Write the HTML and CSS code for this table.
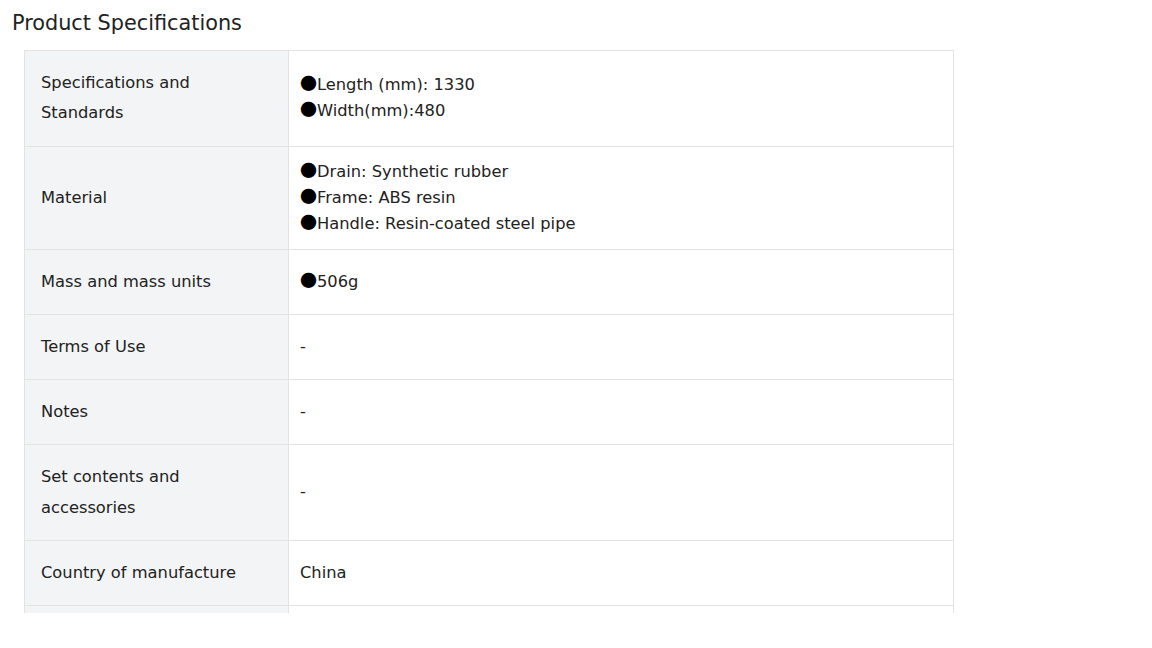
FILE: index.html
```html
<!DOCTYPE html>
<html lang="en">
<head>
<meta charset="utf-8">
<title>Product Specifications</title>
<link rel="stylesheet" href="styles.css">
</head>
<body>
<div class="page">
  <h2 class="title">Product Specifications</h2>
  <div class="table-wrap">
    <table class="spec">
      <tr>
        <th>Specifications and<br>Standards</th>
        <td><p><span class="dot">●</span>Length (mm): 1330</p><p><span class="dot">●</span>Width(mm):480</p></td>
      </tr>
      <tr>
        <th>Material</th>
        <td><p><span class="dot">●</span>Drain: Synthetic rubber</p><p><span class="dot">●</span>Frame: ABS resin</p><p><span class="dot">●</span>Handle: Resin-coated steel pipe</p></td>
      </tr>
      <tr>
        <th>Mass and mass units</th>
        <td><p><span class="dot">●</span>506g</p></td>
      </tr>
      <tr>
        <th>Terms of Use</th>
        <td><p>-</p></td>
      </tr>
      <tr>
        <th>Notes</th>
        <td><p>-</p></td>
      </tr>
      <tr>
        <th>Set contents and<br>accessories</th>
        <td><p>-</p></td>
      </tr>
      <tr>
        <th>Country of manufacture</th>
        <td><p>China</p></td>
      </tr>
      <tr>
        <th>JAN code</th>
        <td><p>-</p></td>
      </tr>
    </table>
  </div>
</div>
</body>
</html>
```

FILE: styles.css
```css
html, body {
  margin: 0;
  padding: 0;
  background: #ffffff;
}
body {
  font-family: "DejaVu Sans", "Noto Sans CJK JP", sans-serif;
  color: #222222;
}
.page {
  padding: 8px 12px 0;
}
.title {
  margin: 0;
  font-size: 20.8px;
  font-weight: 400;
  line-height: 30px;
  color: #222222;
}
.table-wrap {
  margin: 12px 0 0 12px;
  height: 563px;
  overflow: hidden;
}
.spec {
  width: 930px;
  border-collapse: collapse;
  font-size: 16.3px;
}
.spec th,
.spec td {
  border: 1px solid #e3e3e3;
  vertical-align: middle;
  text-align: left;
}
.spec th {
  width: 231px;
  background: #f3f4f6;
  font-weight: 400;
  line-height: 30.5px;
  padding: 16.75px 16px;
}
.spec td {
  padding: 12px 11px;
  line-height: 26.3px;
}
.spec p {
  margin: 0;
}
.dot {
  font-family: "Noto Sans CJK JP", sans-serif;
  color: #000;
  display: inline-block;
  width: 17px;
  font-size: 17px;
  line-height: 1;
}
```
